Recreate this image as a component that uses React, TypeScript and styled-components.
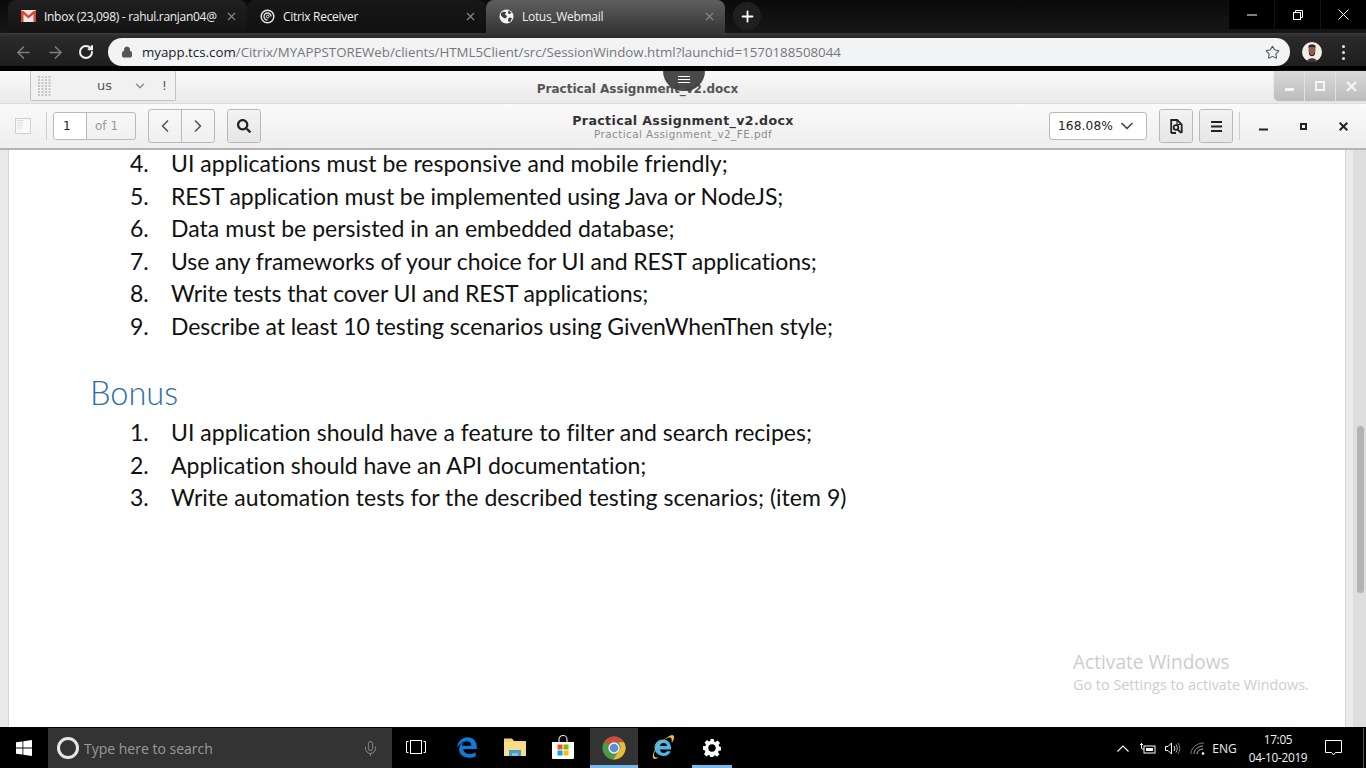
import React from "react";
import styled, { createGlobalStyle } from "styled-components";
import { X, Plus, ArrowLeft, ArrowRight, RotateCw, Lock, Star, ChevronLeft, ChevronRight, ChevronDown, Mic } from "lucide-react";
import { FaSearch } from "react-icons/fa";

const Global = createGlobalStyle`
  html, body { margin: 0; padding: 0; width: 1366px; height: 768px; overflow: hidden; background: #fff; }
  #root { width: 1366px; height: 768px; }
`;

const Screen = styled.div`
  width: 1366px; height: 768px; display: flex; flex-direction: column; position: relative; overflow: hidden;
  font-family: "Open Sans", "Liberation Sans", sans-serif;
`;

/* ---------- browser chrome ---------- */
const TabStrip = styled.div`
  height: 33px; flex: none; display: flex; align-items: flex-end; padding-left: 8px;
  background: linear-gradient(#0a0a0a, #171717); position: relative;
`;
const Tab = styled.div<{ $active?: boolean; $dim?: boolean }>`
  width: 239px; height: 33px; box-sizing: border-box; display: flex; align-items: center; gap: 8px; padding: 0 9px 1px 13px;
  border-radius: 8px 8px 0 0; color: #f0f0f0; font-size: 12px; letter-spacing: -0.3px;
  background: ${p => p.$active ? "linear-gradient(#5f5f5f, #343434)" : p.$dim ? "linear-gradient(#181818, #101010)" : "linear-gradient(#1f1f1f, #141414)"};
`;
const TabTitle = styled.span`flex: 1; white-space: nowrap; overflow: hidden;`;
const TabClose = styled(X)`color: #8a8a8a; flex: none;`;
const NewTab = styled.div`
  width: 28px; height: 28px; border-radius: 50%; background: #1f1f1f; color: #fff; display: flex; align-items: center; justify-content: center;
  margin: 0 0 3px 8px;
`;
const WindowControls = styled.div`
  position: absolute; top: 0; right: 0; height: 29px; display: flex; background: #000;
`;
const WindowControl = styled.div`
  width: 46px; height: 29px; display: flex; align-items: center; justify-content: center; color: #fff; border-left: 1px solid #151515; box-sizing: border-box;
`;
const Toolbar = styled.div`
  height: 33px; flex: none; display: flex; align-items: flex-start; padding-top: 5px; box-sizing: border-box;
  background: linear-gradient(#3b3b3b 0, #2a2a2a 4px, #1e1e1e 100%);
`;
const NavIcons = styled.div`
  width: 108px; flex: none; height: 28px; display: flex; align-items: center; padding-left: 14px; gap: 13px; box-sizing: border-box;
`;
const Omnibox = styled.div`
  width: 1182px; height: 28px; flex: none; border-radius: 14px; background: #f1f3f4; display: flex; align-items: center; box-sizing: border-box; padding: 0 10px 0 13px;
  font-size: 13.3px; color: #777;
`;
const Url = styled.span`flex: 1; margin-left: 9px; white-space: nowrap;`;
const Host = styled.span`color: #222;`;
const ProfileArea = styled.div`
  flex: 1; height: 28px; display: flex; align-items: center; padding-left: 12px; gap: 20px;
`;
const Dots = styled.div`
  display: flex; flex-direction: column; gap: 3px;
`;
const Dot = styled.span`width: 3px; height: 3px; border-radius: 50%; background: #e8e8e8; display: block;`;
const BlackBar = styled.div`height: 5px; flex: none; background: #000;`;

/* ---------- citrix header ---------- */
const SessionHeader = styled.div`
  height: 33px; flex: none; position: relative; display: flex; align-items: center; justify-content: center; box-sizing: border-box; padding: 4px 91px 0 0;
  background: linear-gradient(#f9f9f9, #e9e9e9);
  border-bottom: 1px solid #dcdcdc;
  font-family: "DejaVu Sans", sans-serif; font-weight: 700; font-size: 12px; color: #555;
`;
const SessionTitle = styled.span``;
const FloatingBar = styled.div`
  position: absolute; left: 30px; top: 0; width: 146px; height: 30px; box-sizing: border-box; border: 1px solid #c2c2c2; border-top: none; border-radius: 0 0 2px 2px;
  background: #f1f1f1; display: flex; align-items: center; font-weight: 400; color: #555; font-size: 13px;
`;
const Grip = styled.svg`margin-left: 7px; flex: none;`;
const Lang = styled.span`margin-left: 46px; width: 36px;`;
const Bang = styled.span`margin-left: 15px; font-size: 12px;`;
const SessionControls = styled.div`
  position: absolute; right: 0; top: 0; width: 92px; height: 30px; display: flex; border-radius: 0 0 0 5px; overflow: hidden;
  background: linear-gradient(#d9d9d9, #bcbcbc); box-shadow: 0 0 1px #999;
`;
const SessionControl = styled.div`
  flex: 1; display: flex; align-items: center; justify-content: center; border-right: 1px solid #e2e2e2; &:last-child { border-right: none; }
`;
const Handle = styled.div`
  position: absolute; left: 663px; top: 71px; width: 42px; height: 20px; border-radius: 0 0 21px 21px; background: rgba(64,64,64,0.95);
  display: flex; justify-content: center; padding-top: 5px; box-sizing: border-box;
`;
const HandleLines = styled.div`
  width: 12px; height: 7px; border-top: 1px solid #fff; border-bottom: 1px solid #fff; position: relative; box-sizing: border-box;
  &::after { content: ""; position: absolute; left: 0; right: 0; top: 2px; height: 1px; background: #fff; }
`;

/* ---------- pdf toolbar ---------- */
const PdfBar = styled.div`
  height: 46px; flex: none; position: relative; display: flex; align-items: center; box-sizing: border-box;
  background: linear-gradient(#fafafa, #eeeeee); border-bottom: 2px solid #b4b4b4; padding: 0 3px 0 15px;
  font-family: "DejaVu Sans", sans-serif;
`;
const Separator = styled.div<{ $gapLeft: number; $gapRight: number }>`
  width: 1px; height: 28px; background: #cfcfcf; flex: none; margin: 0 ${p => p.$gapRight}px 0 ${p => p.$gapLeft}px;
`;
const PageBox = styled.div`
  width: 83px; height: 28px; flex: none; display: flex; border: 1px solid #b9b9b9; border-radius: 3px; box-sizing: border-box; font-size: 12px; overflow: hidden;
`;
const PageInput = styled.div`
  width: 33px; background: #fff; border-right: 1px solid #b9b9b9; color: #222; display: flex; align-items: center; padding-left: 9px; box-sizing: border-box;
`;
const PageOf = styled.div`flex: 1; color: #999; display: flex; align-items: center; padding-left: 8px;`;
const ButtonGroup = styled.div<{ $left: number }>`
  height: 34px; flex: none; display: flex; margin-left: ${p => p.$left}px; border: 1px solid #b9b9b9; border-radius: 3px; box-sizing: border-box; overflow: hidden;
`;
const ToolButton = styled.div<{ $shade?: boolean }>`
  width: 32px; display: flex; align-items: center; justify-content: center;
  background: ${p => p.$shade ? "linear-gradient(#f3f3f3, #e6e6e6)" : "transparent"};
  & + & { border-left: 1px solid #b9b9b9; }
`;
const DocTitle = styled.div`
  position: absolute; left: 0; right: 0; top: 9px; text-align: center; color: #333; font-size: 12.6px; font-weight: 700; line-height: 15px; letter-spacing: 0.36px;
`;
const DocSub = styled.div`
  font-size: 10.4px; font-weight: 400; color: #8c8c8c; line-height: 13px; letter-spacing: 0.45px;
`;
const RightTools = styled.div`
  margin-left: auto; display: flex; align-items: center; height: 100%; position: relative;
`;
const ZoomSelect = styled.div`
  width: 98px; height: 28px; box-sizing: border-box; border: 1px solid #b9b9b9; border-radius: 3px; background: #fff; display: flex; align-items: center; justify-content: space-between;
  padding: 0 9px 0 8px; font-size: 12.2px; color: #222; letter-spacing: 0.1px;
`;
const Win = styled.div`width: 40px; display: flex; align-items: center; justify-content: center;`;

/* ---------- document ---------- */
const Stage = styled.div`flex: 1; display: flex; min-height: 0; position: relative;`;
const Gutter = styled.div`width: 9px; flex: none; background: #e9e9e9; border-right: 1px solid #d6d6d6; box-sizing: border-box;`;
const Page = styled.div`
  flex: 1; background: #fff; overflow: hidden; font-family: "Lato", sans-serif; color: #111; font-size: 23px; font-variant-ligatures: none;
`;
const List = styled.ol`list-style: none; margin: 0; padding: 0 0 0 121px;`;
const FirstList = styled(List)`margin-top: -3px;`;
const Item = styled.li<{ $track: number }>`
  height: 32.5px; line-height: 32.5px; display: flex; white-space: nowrap; letter-spacing: ${p => p.$track}px;
`;
const Num = styled.span`width: 41px; flex: none; letter-spacing: 0;`;
const Heading = styled.h2`
  margin: 29px 0 0 81px; height: 44px; line-height: 44px; font-size: 32.5px; font-weight: 300; color: #2a6cab;
`;
const SecondList = styled(List)`margin-top: 1px;`;
const ScrollTrack = styled.div`
  width: 21px; flex: none; display: flex; box-sizing: border-box; border-left: 1px solid #d4d4d4;
`;
const ScrollEdge = styled.div`width: 7px; background: #ebebeb;`;
const ScrollRail = styled.div`flex: 1; background: #dedede; padding-top: 276px; display: flex; justify-content: center; box-sizing: border-box; padding-left: 1px;`;
const Thumb = styled.div`width: 7px; height: 167px; border-radius: 4px; background: #b3b3b3;`;
const Watermark = styled.div`
  position: absolute; left: 1073px; top: 500px; color: #cdcdcd; font-family: "Open Sans", sans-serif; font-size: 14.4px; line-height: 22px; pointer-events: none;
`;
const WatermarkTitle = styled.div`font-size: 19.1px; line-height: 24px;`;

/* ---------- taskbar ---------- */
const Taskbar = styled.div`
  height: 41px; flex: none; background: #000; display: flex; align-items: stretch; box-sizing: border-box; padding-top: 1px;
`;
const Start = styled.div`width: 48px; display: flex; align-items: center; justify-content: center; flex: none;`;
const SearchBox = styled.div`
  width: 344px; flex: none; background: #333; display: flex; align-items: center; box-sizing: border-box; padding: 0 13px 0 9px; color: #9a9a9a; font-size: 14px;
`;
const Cortana = styled.div`width: 22px; height: 22px; box-sizing: border-box; border-radius: 50%; border: 3px solid #e8e8e8; flex: none;`;
const SearchText = styled.span`margin-left: 5px; flex: 1;`;
const TaskIcon = styled.div<{ $w?: number; $bg?: boolean; $run?: boolean; $ml?: number }>`
  width: ${p => p.$w ?? 48}px; flex: none; display: flex; align-items: center; justify-content: center; box-sizing: border-box;
  margin-left: ${p => p.$ml ?? 0}px;
  background: ${p => p.$bg ? "#333" : "transparent"};
  border-bottom: 3px solid ${p => p.$run ? "#76b9ed" : "transparent"};
  padding-top: ${p => p.$run ? 3 : 0}px;
`;
const Tray = styled.div`margin-left: auto; display: flex; align-items: center; color: #fff; padding-right: 2px;`;
const TraySlot = styled.div<{ $w: number }>`width: ${p => p.$w}px; flex: none; display: flex; align-items: center; justify-content: center;`;
const Lang2 = styled(TraySlot)`font-size: 12px; color: #eee;`;
const Clock = styled.div`width: 78px; text-align: center; font-size: 11.8px; line-height: 18px; color: #f2f2f2; letter-spacing: -0.3px;`;
const DeskLine = styled.div`width: 1px; height: 40px; background: #555; margin-left: 14px;`;

const GmailIcon = () => (
  <svg width="15" height="12" viewBox="0 0 15 12"><rect width="15" height="12" rx="1" fill="#f0e6e4" /><path d="M0 1h2.500L7.500 5.500 12.500 1H15v10.200c0 .4-.4.8-.8.8h-1.700V4.300L7.500 8.600 2.500 4.300V12H.8c-.4 0-.8-.4-.8-.8z" fill="#d44638" /></svg>
);
const CitrixIcon = () => (
  <svg width="15" height="15" viewBox="0 0 15 15" fill="none" stroke="#e6e6e6"><circle cx="7.500" cy="7.500" r="6.300" strokeWidth="1.500" /><path d="M11 7.500A3.500 3.500 0 1 0 7.500 11" strokeWidth="1.300" /><circle cx="7.800" cy="7.500" r="1.400" strokeWidth="1" /></svg>
);
const GlobeIcon = () => (
  <svg width="15" height="15" viewBox="0 0 15 15"><circle cx="7.500" cy="7.500" r="7" fill="#f4f4f4" /><path d="M2 4l3-1.500 2 1-1 2 2 1.500-.5 1.500-1.500 1L4 8.500 2 6.500zM9.500 1.500l3 2-1.500 1.500-2-.5zM10 8.500l3 .5-1.500 3.500-2 .5-.5-2.500z" fill="#3d3d3d" /></svg>
);
const WinLogo = () => (
  <svg width="16" height="16" viewBox="0 0 16 16" fill="#fff"><path d="M0 2.300 6.500 1.400v6.200H0zM7.300 1.300 16 0v7.600H7.300zM0 8.400h6.500v6.200L0 13.700zM7.300 8.400H16V16l-8.700-1.300z" /></svg>
);
const TaskView = () => (
  <svg width="20" height="14" viewBox="0 0 20 14" fill="none" stroke="#fff" strokeWidth="1"><rect x="4.500" y=".5" width="11" height="13" /><path d="M2.500 1.500H.5v11h2M17.500 1.500h2v11h-2" /></svg>
);
const EdgeIcon = () => (
  <svg width="22" height="22" viewBox="0 0 22 22" fill="none"><path d="M1.200 12C1.500 5.500 6 1.300 11.500 1.300c5.600 0 9.300 4 9.300 9.700v2H7.300c.3 3.300 3 5 6.200 5 2.500 0 4.600-.7 6.200-1.800v4c-1.900 1-4.300 1.500-6.800 1.500-6 0-9.800-3.700-9.800-8.400 0-3.400 2-6 5-7.300-1.300 1.100-2 2.400-2.200 3.700h9.400c0-2.400-1.400-4.400-4-4.400C7.500 4.800 3.400 7.800 1.200 12z" fill="#0f7bd8" /></svg>
);
const FolderIcon = () => (
  <svg width="22" height="20" viewBox="0 0 22 20"><path d="M0 1.500h8l2 2.500h12v15H0z" fill="#f3d27a" /><rect y="5" width="22" height="14" fill="#f8dc8a" /><path d="M5 19v-6h12v6h-3v-3H8v3z" fill="#3f9fc6" /><rect x="8" y="16" width="6" height="3" fill="#7fc5dd" /></svg>
);
const StoreIcon = () => (
  <svg width="24" height="24" viewBox="0 0 24 24"><path d="M8 7V4.500a4 4 0 0 1 8 0V7" fill="none" stroke="#ddd" strokeWidth="1.200" /><path d="M1 7h22v16a1 1 0 0 1-1 1H2a1 1 0 0 1-1-1z" fill="#fff" /><rect x="6.500" y="9.500" width="5" height="5" fill="#f25022" /><rect x="12.500" y="9.500" width="5" height="5" fill="#7fba00" /><rect x="6.500" y="15.500" width="5" height="5" fill="#00a4ef" /><rect x="12.500" y="15.500" width="5" height="5" fill="#ffb900" /></svg>
);
const ChromeIcon = () => (
  <svg width="24" height="24" viewBox="0 0 24 24"><circle cx="12" cy="12" r="11.500" fill="#4b9a48" /><path d="M12 .5A11.500 11.500 0 0 1 22 6.300H12a5.700 5.700 0 0 0-5.200 3.400L2.700 5.200A11.500 11.500 0 0 1 12 .5z" fill="#cf4b3b" /><path d="M22 6.300A11.500 11.500 0 0 1 11.300 23.500l5.300-8.200A5.700 5.700 0 0 0 16 6.300z" fill="#e8bb3b" /><circle cx="12" cy="12" r="5.700" fill="#f2f2f2" /><circle cx="12" cy="12" r="4.300" fill="#5b8fd9" /></svg>
);
const IeIcon = () => (
  <svg width="24" height="26" viewBox="0 0 24 26" fill="none"><path d="M3.500 14C3.500 8.800 7.500 5.500 12 5.500s8 3.300 8 8.500v1.500H9c.3 2.200 1.600 3.500 3.700 3.500 1.400 0 2.500-.6 3-1.700h4c-.9 3-3.700 4.700-7 4.700-5.300 0-9.200-3.600-9.200-8.500zM9 12h7c-.2-1.900-1.500-3-3.500-3S9.300 10.100 9 12z" fill="#4db6e8" /><path d="M2.500 24.500C.5 22.500 3 15.500 9 9.500S20.500-.5 22.500 1.500c1.300 1.300.3 4.500-1.800 7.600.1-2 .2-4.800-.9-5.400C17.800 2.600 13 5.500 9 10 5 14.500 1.800 20 3.500 22.800c.6 1 2.500 1 4.500.2-2 1.600-4.300 2.600-5.500 1.500z" fill="#e9c23a" /></svg>
);
const GearIcon = () => (
  <svg width="18" height="18" viewBox="0 0 18 18"><path d="M7.300 0h3.400l.4 2.400 1.500.6 2-1.400 2.400 2.400-1.400 2 .6 1.500L18 8v3.400l-2.400.4-.6 1.500 1.400 2-2.400 2.400-2-1.400-1.500.6-.4 2.100H7.300l-.4-2.400-1.500-.6-2 1.400-2.400-2.400 1.400-2-.6-1.500L0 10.700V7.300l2.400-.4.6-1.500-1.400-2L4 1l2 1.400 1.500-.6z" fill="#fff" /><circle cx="9" cy="9" r="3.700" fill="#000" /></svg>
);
const DocToolIcon = () => (
  <svg width="13" height="15" viewBox="0 0 13 15" fill="none" stroke="#222" strokeWidth="1.800"><path d="M1.200 14V1h6l4.500 4.500v8.500" /><path d="M7 1v4.500h4.700" strokeWidth="1.200" /><circle cx="6" cy="8.500" r="2.300" /><path d="M7.500 10.500l4 3.500M1.200 14H6" /></svg>
);
const ThumbIcon = () => (
  <svg width="16" height="16" viewBox="0 0 16 16"><rect x=".5" y=".5" width="15" height="15" fill="#f8f8f8" stroke="#d0d0d0" /><path d="M2 2.500h6M2 5h6M2 7.500h6M2 10h4" stroke="#dadada" /></svg>
);
const Bars = () => (
  <svg width="11" height="11" viewBox="0 0 11 11" fill="#222"><rect width="11" height="2" /><rect y="4.500" width="11" height="2" /><rect y="9" width="11" height="2" /></svg>
);

const first: [string, string, number][] = [
  ["4.", "UI applications must be responsive and mobile friendly;", 0.02],
  ["5.", "REST application must be implemented using Java or NodeJS;", -0.085],
  ["6.", "Data must be persisted in an embedded database;", 0.03],
  ["7.", "Use any frameworks of your choice for UI and REST applications;", -0.08],
  ["8.", "Write tests that cover UI and REST applications;", -0.1],
  ["9.", "Describe at least 10 testing scenarios using GivenWhenThen style;", -0.08],
];
const second: [string, string, number][] = [
  ["1.", "UI application should have a feature to filter and search recipes;", 0.03],
  ["2.", "Application should have an API documentation;", -0.02],
  ["3.", "Write automation tests for the described testing scenarios; (item 9)", 0.04],
];

export default function App() {
  return (
    <Screen>
      <Global />
      <TabStrip>
        <Tab><GmailIcon /><TabTitle>Inbox (23,098) - rahul.ranjan04@</TabTitle><TabClose size={13} /></Tab>
        <Tab $dim><CitrixIcon /><TabTitle>Citrix Receiver</TabTitle><TabClose size={13} /></Tab>
        <Tab $active><GlobeIcon /><TabTitle>Lotus_Webmail</TabTitle><TabClose size={13} /></Tab>
        <NewTab><Plus size={17} strokeWidth={2.6} /></NewTab>
        <WindowControls>
          <WindowControl><svg width="10" height="10" viewBox="0 0 10 10"><path d="M0 5h10" stroke="#fff" /></svg></WindowControl>
          <WindowControl><svg width="10" height="10" viewBox="0 0 10 10" fill="none" stroke="#fff"><rect x=".5" y="2.500" width="7" height="7" /><path d="M2.500 2.500v-2h7v7h-2" /></svg></WindowControl>
          <WindowControl><svg width="11" height="11" viewBox="0 0 11 11"><path d="M.5.5l10 10M10.500.5l-10 10" stroke="#fff" /></svg></WindowControl>
        </WindowControls>
      </TabStrip>
      <Toolbar>
        <NavIcons>
          <ArrowLeft size={19} color="#7d7d7d" />
          <ArrowRight size={19} color="#7d7d7d" />
          <RotateCw size={16} color="#f2f2f2" strokeWidth={3} />
        </NavIcons>
        <Omnibox>
          <Lock size={12} color="#555" fill="#555" />
          <Url><Host>myapp.tcs.com</Host>/Citrix/MYAPPSTOREWeb/clients/HTML5Client/src/SessionWindow.html?launchid=1570188508044</Url>
          <Star size={15} color="#555" strokeWidth={1.7} />
        </Omnibox>
        <ProfileArea>
          <svg width="20" height="20" viewBox="0 0 20 20"><circle cx="10" cy="10" r="10" fill="#f1ece6" /><ellipse cx="10" cy="8.500" rx="3.500" ry="4.500" fill="#8a6248" /><path d="M6.500 7c0-3 7-3 7 0v-3c-1-2-6-2-7 0zM7 10c1 4 5 4 6 0v2c-1 3-5 3-6 0z" fill="#2a201c" /><path d="M5 20c0-5 10-5 10 0z" fill="#3a3a3a" /></svg>
          <Dots><Dot /><Dot /><Dot /></Dots>
        </ProfileArea>
      </Toolbar>
      <BlackBar />
      <SessionHeader>
        <SessionTitle>Practical Assignment_v2.docx</SessionTitle>
        <FloatingBar>
          <Grip width="13" height="22" viewBox="0 0 13 22" fill="#c6c6c6">
            {[1, 4, 7, 10, 13, 16, 19].map(y => [0, 3.500, 7, 10.500].map(x => <rect key={`${x}-${y}`} x={x} y={y} width="2" height="2" />))}
          </Grip>
          <Lang>us</Lang>
          <ChevronDown size={14} color="#888" strokeWidth={2.2} />
          <Bang>!</Bang>
        </FloatingBar>
        <SessionControls>
          <SessionControl><svg width="9" height="10" viewBox="0 0 9 10"><rect y="7" width="9" height="3" fill="#f4f4f4" /></svg></SessionControl>
          <SessionControl><svg width="10" height="10" viewBox="0 0 10 10" fill="none"><rect x="1" y="1" width="8" height="8" stroke="#f4f4f4" strokeWidth="2" /></svg></SessionControl>
          <SessionControl><svg width="11" height="11" viewBox="0 0 11 11"><path d="M1 1l9 9M10 1l-9 9" stroke="#f4f4f4" strokeWidth="2.400" /></svg></SessionControl>
        </SessionControls>
      </SessionHeader>
      <Handle><HandleLines /></Handle>
      <PdfBar>
        <DocTitle>Practical Assignment_v2.docx<DocSub>Practical Assignment_v2_FE.pdf</DocSub></DocTitle>
        <ThumbIcon />
        <Separator $gapLeft={15} $gapRight={6} />
        <PageBox><PageInput>1</PageInput><PageOf>of 1</PageOf></PageBox>
        <ButtonGroup $left={12}>
          <ToolButton><ChevronLeft size={20} color="#555" strokeWidth={2} /></ToolButton>
          <ToolButton><ChevronRight size={20} color="#555" strokeWidth={2} /></ToolButton>
        </ButtonGroup>
        <ButtonGroup $left={12}>
          <ToolButton $shade><FaSearch size={14} color="#222" /></ToolButton>
        </ButtonGroup>
        <RightTools>
          <ZoomSelect>168.08%<ChevronDown size={20} color="#444" strokeWidth={2} /></ZoomSelect>
          <ButtonGroup $left={12}><ToolButton $shade><DocToolIcon /></ToolButton></ButtonGroup>
          <ButtonGroup $left={6}><ToolButton $shade><Bars /></ToolButton></ButtonGroup>
          <Separator $gapLeft={6} $gapRight={3} />
          <Win><svg width="9" height="9" viewBox="0 0 9 9"><rect y="6.500" width="9" height="2" fill="#222" /></svg></Win>
          <Win><svg width="7" height="7" viewBox="0 0 7 7" fill="none"><rect x="1" y="1" width="5" height="5" stroke="#222" strokeWidth="2" /></svg></Win>
          <Win><svg width="9" height="9" viewBox="0 0 9 9"><path d="M.7.7l7.600 7.600M8.300.7L.7 8.300" stroke="#222" strokeWidth="2" /></svg></Win>
        </RightTools>
      </PdfBar>
      <Stage>
        <Gutter />
        <Page>
          <FirstList>{first.map(([n, t, k]) => <Item key={n} $track={k}><Num>{n}</Num>{t}</Item>)}</FirstList>
          <Heading>Bonus</Heading>
          <SecondList>{second.map(([n, t, k]) => <Item key={n} $track={k}><Num>{n}</Num>{t}</Item>)}</SecondList>
        </Page>
        <ScrollTrack><ScrollEdge /><ScrollRail><Thumb /></ScrollRail></ScrollTrack>
        <Watermark><WatermarkTitle>Activate Windows</WatermarkTitle>Go to Settings to activate Windows.</Watermark>
      </Stage>
      <Taskbar>
        <Start><WinLogo /></Start>
        <SearchBox><Cortana /><SearchText>Type here to search</SearchText><Mic size={17} color="#8a8a8a" strokeWidth={1.4} /></SearchBox>
        <TaskIcon><TaskView /></TaskIcon>
        <TaskIcon $ml={3}><EdgeIcon /></TaskIcon>
        <TaskIcon><FolderIcon /></TaskIcon>
        <TaskIcon><StoreIcon /></TaskIcon>
        <TaskIcon $ml={3} $bg $run><ChromeIcon /></TaskIcon>
        <TaskIcon $ml={1}><IeIcon /></TaskIcon>
        <TaskIcon $ml={5} $w={40} $run><GearIcon /></TaskIcon>
        <Tray>
          <TraySlot $w={24}><svg width="12" height="7" viewBox="0 0 12 7" fill="none" stroke="#fff" strokeWidth="1.100"><path d="M.5 6.500L6 1l5.500 5.500" /></svg></TraySlot>
          <TraySlot $w={25}><svg width="16" height="11" viewBox="0 0 16 11"><rect x="4" y="3" width="11" height="7" fill="none" stroke="#fff" /><rect x="6" y="5" width="7" height="3" fill="#fff" /><path d="M0 1.500h3M1.500 0v5c0 1 1 1 2.500 1" stroke="#fff" fill="none" /></svg></TraySlot>
          <TraySlot $w={25}><svg width="16" height="13" viewBox="0 0 16 13" fill="none" stroke="#fff" strokeWidth="1"><path d="M.5 4.500h2.500L6.500 1v11L3 8.500H.5z" /><path d="M9 4c1 1.500 1 3.500 0 5" /><path d="M11 2.500c1.700 2.500 1.700 5.500 0 8" stroke="#bbb" /><path d="M13 1c2.300 3.300 2.300 7.700 0 11" stroke="#888" /></svg></TraySlot>
          <TraySlot $w={25}><svg width="15" height="13" viewBox="0 0 15 13" fill="none" stroke="#ccc"><path d="M1 12C1 6 6 1 14 1" stroke="#777" /><path d="M4 12c0-4 4-8 9-8" stroke="#aaa" /><path d="M7 12c0-2.500 2.500-5 6-5" /><circle cx="13" cy="11.500" r="1.300" fill="#fff" stroke="none" /></svg></TraySlot>
          <Lang2 $w={29}>ENG</Lang2>
          <Clock>17:05<br />04-10-2019</Clock>
          <TraySlot $w={32}><svg width="17" height="16" viewBox="0 0 17 16" fill="none" stroke="#fff"><path d="M.5.5h16v12h-6l-2 2.500-2-2.500h-6z" /></svg></TraySlot>
          <DeskLine />
        </Tray>
      </Taskbar>
    </Screen>
  );
}
